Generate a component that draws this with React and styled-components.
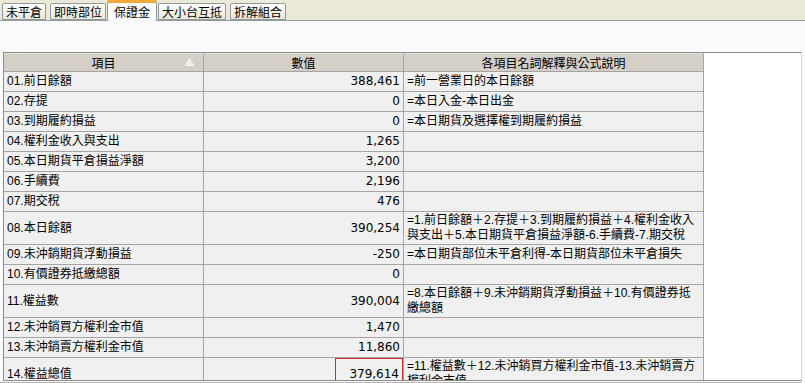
import React from "react";
import styled, { createGlobalStyle } from "styled-components";

const GlobalStyle = createGlobalStyle`
  html, body { margin: 0; padding: 0; }
  body {
    background: #fbfbfd;
    font-family: "Liberation Sans", "Noto Sans CJK TC", sans-serif;
    font-size: 12px;
    color: #000;
    width: 805px;
    height: 383px;
    overflow: hidden;
  }
`;

const Page = styled.div`
  display: flex;
  flex-direction: column;
  width: 805px;
  height: 383px;
`;

const TabBar = styled.div`
  display: flex;
  align-items: flex-end;
  gap: 4px;
  height: 21px;
  box-sizing: border-box;
  padding-left: 2px;
  background: #ece9d8;
  border-bottom: 1px solid #919b9c;
`;

const Tab = styled.div`
  box-sizing: border-box;
  height: ${(p) => (p.$active ? "21px" : "17px")};
  margin: ${(p) => (p.$active ? "0 -3px -1px" : "0")};
  padding: ${(p) => (p.$active ? "0 6px" : "0 3px")};
  display: flex;
  align-items: center;
  font-family: "Noto Sans CJK TC", sans-serif;
  font-size: 12px;
  line-height: 14px;
  border: 1px solid #919b9c;
  border-bottom: ${(p) => (p.$active ? "none" : "1px solid #919b9c")};
  border-top: ${(p) => (p.$active ? "3px solid #f3a83a" : "1px solid #919b9c")};
  border-radius: 2px 2px 0 0;
  background: ${(p) =>
    p.$active ? "#fcfcfe" : "linear-gradient(#ffffff, #f3f2ec 60%, #e6e4d9)"};
  position: relative;
  z-index: ${(p) => (p.$active ? 1 : 0)};
`;

const Body = styled.div`
  padding: 31px 0 0 3px;
  flex: 1;
  display: flex;
  flex-direction: column;
`;

const Panel = styled.div`
  box-sizing: border-box;
  width: 799px;
  height: 329px;
  background: #ffffff;
  border-top: 1px solid #8c8c8c;
  border-left: 1px solid #8c8c8c;
  border-right: 1px solid #d8d8d8;
  border-bottom: 1px solid #8c8c8c;
  overflow: hidden;
`;

const BottomRule = styled.div`
  width: 802px;
  height: 1px;
  margin-top: 1px;
  margin-left: -3px;
  background: #b4b4b4;
`;

const Grid = styled.div`
  display: grid;
  grid-template-columns: 200px 200px 300px;
  width: 700px;
`;

const HeadCell = styled.div`
  position: relative;
  box-sizing: border-box;
  height: 19px;
  display: flex;
  align-items: center;
  justify-content: center;
  background: #d4d0c8;
  border-top: 1px solid #e4e2dc;
  border-right: 1px solid #a9a6a0;
  border-bottom: 1px solid #a4a4a4;
  font-family: "Noto Sans CJK TC", sans-serif;
  line-height: 14px;
`;

const SortArrow = styled.svg`
  position: absolute;
  right: 9px;
  top: 4px;
`;

const Cell = styled.div`
  box-sizing: border-box;
  height: ${(p) => (p.$tall ? "33px" : "20px")};
  display: flex;
  flex-direction: column;
  justify-content: ${(p) => (p.$top ? "flex-start" : "center")};
  align-items: ${(p) => (p.$num ? "flex-end" : "flex-start")};
  padding: ${(p) =>
    p.$hl ? "0" : p.$num ? "0 3px 0 2px" : p.$top ? "1px 2px 0 3px" : "0 2px 0 3px"};
  background: #f0f0f0;
  border-right: 1px solid #a5a5a5;
  border-bottom: 1px solid #a5a5a5;
  font-family: ${(p) =>
    p.$num
      ? `"DejaVu Sans", "Noto Sans CJK TC", sans-serif`
      : `"Liberation Sans", "Noto Sans CJK TC", sans-serif`};
  line-height: 15px;
  white-space: nowrap;
  overflow: hidden;
`;

const Line = styled.span`
  display: block;
`;

const HighlightBox = styled.span`
  box-sizing: border-box;
  height: 100%;
  width: 68px;
  display: flex;
  align-items: center;
  justify-content: flex-end;
  padding-right: 3px;
  border: 1px solid #cc2b2b;
  border-bottom: none;
`;

const rows = [
  { name: "01.前日餘額", value: "388,461", note: ["=前一營業日的本日餘額"] },
  { name: "02.存提", value: "0", note: ["=本日入金-本日出金"] },
  { name: "03.到期履約損益", value: "0", note: ["=本日期貨及選擇權到期履約損益"] },
  { name: "04.權利金收入與支出", value: "1,265", note: [] },
  { name: "05.本日期貨平倉損益淨額", value: "3,200", note: [] },
  { name: "06.手續費", value: "2,196", note: [] },
  { name: "07.期交稅", value: "476", note: [] },
  {
    name: "08.本日餘額",
    value: "390,254",
    note: [
      "=1.前日餘額＋2.存提＋3.到期履約損益＋4.權利金收入",
      "與支出＋5.本日期貨平倉損益淨額-6.手續費-7.期交稅",
    ],
  },
  {
    name: "09.未沖銷期貨浮動損益",
    value: "-250",
    note: ["=本日期貨部位未平倉利得-本日期貨部位未平倉損失"],
  },
  { name: "10.有價證券抵繳總額", value: "0", note: [] },
  {
    name: "11.權益數",
    value: "390,004",
    note: ["=8.本日餘額＋9.未沖銷期貨浮動損益＋10.有價證券抵", "繳總額"],
  },
  { name: "12.未沖銷買方權利金市值", value: "1,470", note: [] },
  { name: "13.未沖銷賣方權利金市值", value: "11,860", note: [] },
  {
    name: "14.權益總值",
    value: "379,614",
    note: ["=11.權益數＋12.未沖銷買方權利金市值-13.未沖銷賣方", "權利金市值"],
    highlight: true,
  },
];

const tabs = ["未平倉", "即時部位", "保證金", "大小台互抵", "拆解組合"];

export default function App() {
  return (
    <>
      <GlobalStyle />
      <Page>
        <TabBar>
          {tabs.map((t) => (
            <Tab key={t} $active={t === "保證金"}>
              {t}
            </Tab>
          ))}
        </TabBar>
        <Body>
          <Panel>
            <Grid>
              <HeadCell>
                項目
                <SortArrow width="9" height="8" viewBox="0 0 9 8">
                  <path d="M4.5 0.5 L8.5 7.5 L0.5 7.5 Z" fill="#ecebe6" stroke="#f8f8f6" strokeWidth="1" />
                </SortArrow>
              </HeadCell>
              <HeadCell>數值</HeadCell>
              <HeadCell>各項目名詞解釋與公式說明</HeadCell>
              {rows.map((r) => {
                const tall = r.note.length > 1;
                return (
                  <React.Fragment key={r.name}>
                    <Cell $tall={tall}>{r.name}</Cell>
                    <Cell $tall={tall} $num $hl={r.highlight}>
                      {r.highlight ? <HighlightBox>{r.value}</HighlightBox> : r.value}
                    </Cell>
                    <Cell $tall={tall} $top={r.highlight}>
                      {r.note.map((l) => (
                        <Line key={l}>{l}</Line>
                      ))}
                    </Cell>
                  </React.Fragment>
                );
              })}
            </Grid>
          </Panel>
          <BottomRule />
        </Body>
      </Page>
    </>
  );
}
